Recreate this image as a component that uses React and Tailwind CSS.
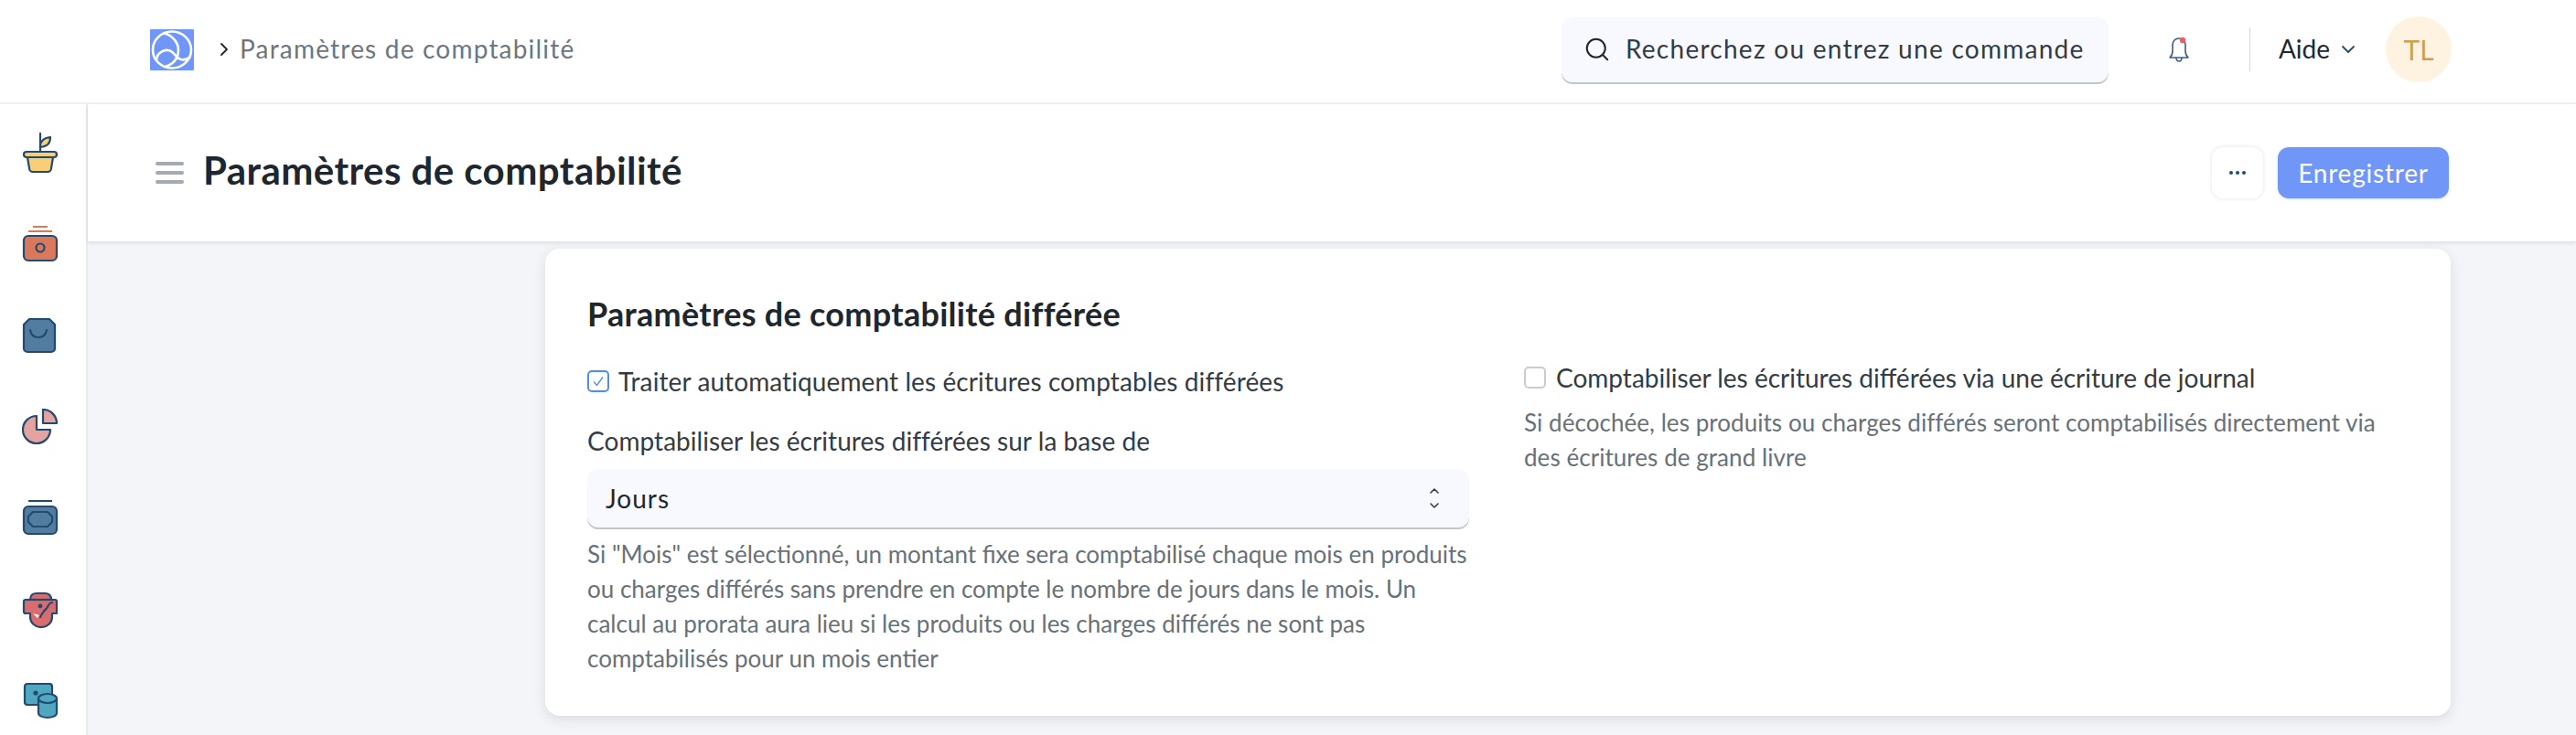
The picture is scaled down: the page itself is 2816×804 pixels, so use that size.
import React from 'react';
import { Search, ChevronRight, ChevronDown, ChevronUp } from 'lucide-react';

const navy = '#234a70';

const Logo = () => (
    <svg width="48" height="45" viewBox="0 0 48 45" className="shrink-0">
        <rect width="48" height="45" rx="1" fill="#7096f8" />
        <g fill="none" stroke="#fff" strokeWidth="2.6">
            <ellipse cx="24" cy="22.5" rx="21" ry="20" />
            <path d="M14 4c10 2 17 10 17 19 0 9-6 16-15 18" />
            <path d="M7 34c0-7 7-12 13-11 7 1 8 9 14 10 4 1 7 0 10-3" />
        </g>
    </svg>
);

const PotIcon = () => (
    <svg width="40" height="44" viewBox="0 0 40 44" fill="none" stroke={navy} strokeWidth="2.2" strokeLinejoin="round" strokeLinecap="round">
        <path d="M20 1v21" />
        <path d="M20 15c0-6 4-9 11-10 0 7-3 10-11 11z" fill="#f8cf76" />
        <path d="M6 27l2 12a4 4 0 004 4h16a4 4 0 004-4l2-12z" fill="#f8cf76" />
        <rect x="2" y="21" width="36" height="6" rx="3" fill="#f8cf76" />
    </svg>
);

const WalletIcon = () => (
    <svg width="40" height="40" viewBox="0 0 40 40" fill="none" stroke={navy} strokeWidth="2.2">
        <path d="M12 1h16M7 6h26" stroke="#d9785a" strokeWidth="2" />
        <rect x="2" y="11" width="36" height="27" rx="5" fill="#d9785a" />
        <circle cx="20" cy="24" r="4.5" />
    </svg>
);

const BagIcon = () => (
    <svg width="40" height="40" viewBox="0 0 40 40" fill="none" stroke={navy} strokeWidth="2.2" strokeLinecap="round">
        <path d="M8 2h22l6 6v26a4 4 0 01-4 4H6a4 4 0 01-4-4V8z" fill="#527ca0" strokeLinejoin="round" />
        <path d="M9 14c1 6 5 8 9 8s8-2 9-8" />
    </svg>
);

const PieIcon = () => (
    <svg width="40" height="40" viewBox="0 0 40 40" fill="none" stroke={navy} strokeWidth="2.2" strokeLinejoin="round">
        <path d="M16 8a15 15 0 1015 15H16z" fill="#e5a3a0" />
        <path d="M23 1a15 15 0 0115 15v0H23z" fill="#e5a3a0" />
    </svg>
);

const CardIcon = () => (
    <svg width="40" height="40" viewBox="0 0 40 40" fill="none" stroke={navy} strokeWidth="2.2" strokeLinejoin="round">
        <path d="M7 1h26" />
        <rect x="2" y="7" width="36" height="30" rx="5" fill="#527ca0" />
        <path d="M12 13h16l5 5v6l-5 5H12l-5-5v-6z" />
    </svg>
);

const SnakeIcon = () => (
    <svg width="40" height="40" viewBox="0 0 40 40" fill="none" stroke={navy} strokeWidth="2.2" strokeLinejoin="round">
        <path d="M9 9c0-5 3-7 7-7h9c4 0 7 2 7 7h4c1 0 2 1 2 2v13h-5v4c0 6-5 11-12 11S9 34 9 28v-4H4c-1 0-2-1-2-2V11c0-1 1-2 2-2z" fill="#d96c6c" />
        <path d="M4 9h28" />
        <path d="M34 12c-3 0-5 2-6 5-1 2-3 3-5 6-1 2-3 3-3 6" />
        <path d="M12 24l7 2-2 3z" fill="#fff" stroke="none" />
        <circle cx="20" cy="16" r="2.4" fill={navy} stroke="none" />
    </svg>
);

const DataIcon = () => (
    <svg width="40" height="40" viewBox="0 0 40 40" fill="none" stroke={navy} strokeWidth="2.2" strokeLinejoin="round">
        <path d="M6 1h24a3 3 0 013 3v18H20v2H6a3 3 0 01-3-3V4a3 3 0 013-3z" fill="#4fa8c0" />
        <circle cx="15" cy="11" r="2.6" fill={navy} stroke="none" />
        <path d="M18 17v16c0 3 5 5 10 5s10-2 10-5V17z" fill="#4fa8c0" />
        <ellipse cx="28" cy="17" rx="10" ry="5" fill="#4fa8c0" />
    </svg>
);

const BellIcon = () => (
    <svg width="26" height="30" viewBox="0 0 26 30" fill="none" stroke="#3f5c80" strokeWidth="1.6" strokeLinejoin="round">
        <path d="M13 3c-4 0-7 3-7 7v7c0 3-1 5-3 7h20c-2-2-3-4-3-7v-7c0-4-3-7-7-7z" />
        <path d="M10 24c0 2 1 4 3 4s3-2 3-4" />
        <circle cx="17" cy="5" r="3.2" fill="#f05d5e" stroke="none" />
    </svg>
);

const sidebarIcons = [PotIcon, WalletIcon, BagIcon, PieIcon, CardIcon, SnakeIcon, DataIcon];

const App = () => {
    return (
        <div className="h-[804px] w-[2816px] overflow-hidden flex flex-col bg-[#f4f5f8] font-['Lato',sans-serif] text-[#1f272e]">
            {/* Navbar */}
            <nav className="h-[114px] shrink-0 bg-white border-b-2 border-[#edf0f4] flex items-center pl-[164px] pr-[136px] pb-[4px]">
                <Logo />
                <ChevronRight size={24} strokeWidth={1.8} className="ml-[21px] text-[#1f272e]" />
                <span className="ml-[5px] pb-[2px] text-[28px] tracking-[1.2px] text-[#6c7680]">Paramètres de comptabilité</span>
                <div className="ml-auto flex items-center">
                    <div className="w-[598px] h-[71px] rounded-[12px] bg-[#f8f9fe] shadow-[0_2px_0_#c0c6cc] flex items-center pl-[24px]">
                        <Search size={30} strokeWidth={1.6} className="text-[#1f272e]" />
                        <span className="ml-[16px] pb-[2px] text-[28px] tracking-[1.27px] text-[#333c44]">Recherchez ou entrez une commande</span>
                    </div>
                    <div className="ml-[64px]"><BellIcon /></div>
                    <div className="ml-[64px] w-px h-[48px] bg-[#d1d8dd]" />
                    <span className="ml-[31px] pb-[2px] text-[28px] text-[#1f272e]">Aide</span>
                    <ChevronDown size={24} strokeWidth={1.8} className="ml-[8px] text-[#234a70]" />
                    <div className="ml-[29px] w-[72px] h-[72px] rounded-full bg-[#fdf3e0] flex items-center justify-center text-[30px] text-[#cfa04a]">TL</div>
                </div>
            </nav>

            <div className="flex flex-1 min-h-0">
                {/* Sidebar */}
                <aside className="w-[96px] shrink-0 bg-white border-r-2 border-[#e8ebf1] flex flex-col items-start pl-[24px] pt-[33px] gap-[60px]">
                    {sidebarIcons.map((Icon, i) => (
                        <div key={i} className="h-[40px] flex items-center"><Icon /></div>
                    ))}
                </aside>

                <main className="flex-1 min-w-0 flex flex-col">
                    {/* Page head */}
                    <header className="h-[150px] shrink-0 bg-white shadow-[0_2px_4px_rgba(25,39,52,0.1)] flex items-center pl-[74px] pr-[139px]">
                        <div className="flex flex-col gap-[6px] w-[31px]">
                            <span className="h-[4px] rounded-full bg-[#a3aab1]" />
                            <span className="h-[4px] rounded-full bg-[#a3aab1]" />
                            <span className="h-[4px] rounded-full bg-[#a3aab1]" />
                        </div>
                        <h1 className="ml-[21px] pb-[6px] text-[42px] tracking-[0.45px] font-bold">Paramètres de comptabilité</h1>
                        <div className="ml-auto flex items-center">
                            <button className="w-[56px] h-[56px] rounded-[12px] bg-white shadow-[0_0_4px_rgba(25,39,52,0.14)] flex items-center justify-center gap-[3px]">
                                <span className="w-[4px] h-[4px] rounded-full bg-[#234a70]" />
                                <span className="w-[4px] h-[4px] rounded-full bg-[#234a70]" />
                                <span className="w-[4px] h-[4px] rounded-full bg-[#234a70]" />
                            </button>
                            <button className="ml-[16px] w-[187px] h-[56px] rounded-[12px] bg-[#7096f8] text-white text-[28px] tracking-[0.8px] shadow-[0_1px_3px_rgba(25,39,52,0.15)]">Enregistrer</button>
                        </div>
                    </header>

                    {/* Form card */}
                    <div className="pl-[500px] pr-[137px] pt-[8px]">
                        <section className="h-[511px] rounded-[16px] bg-white shadow-[0_4px_14px_rgba(25,39,52,0.12)] pl-[46px] pr-[70px] pt-[48px]">
                            <h2 className="text-[36px] tracking-[0.28px] font-bold leading-[46px]">Paramètres de comptabilité différée</h2>
                            <div className="flex gap-[60px] mt-[-1px]">
                                <div className="w-[964px] shrink-0 pt-[34px]">
                                    <label className="flex items-center h-[36px]">
                                        <span className="w-[24px] h-[24px] rounded-[5px] border-2 border-[#4b8df0] flex items-center justify-center">
                                            <svg width="16" height="16" viewBox="0 0 16 16" fill="none" stroke="#4b8df0" strokeWidth="1.3"><path d="M3 8.5l3.5 4 6.5-9" /></svg>
                                        </span>
                                        <span className="ml-[10px] text-[28px] tracking-[0.1px] text-[#333c44]">Traiter automatiquement les écritures comptables différées</span>
                                    </label>
                                    <p className="mt-[29px] text-[28px] tracking-[0.05px] leading-[36px] text-[#333c44]">Comptabiliser les écritures différées sur la base de</p>
                                    <div className="mt-[13px] h-[64px] rounded-[12px] bg-[#f8f9fe] shadow-[0_2px_0_#c0c6cc] flex items-center justify-between pl-[20px] pr-[30px]">
                                        <span className="text-[28px] tracking-[1px] text-[#1f272e]">Jours</span>
                                        <div className="flex flex-col text-[#333c44]">
                                            <ChevronUp size={16} strokeWidth={2.4} />
                                            <ChevronDown size={16} strokeWidth={2.4} />
                                        </div>
                                    </div>
                                    <p className="mt-[10px] text-[26px] leading-[38px] text-[#687178]">
                                        Si "Mois" est sélectionné, un montant fixe sera comptabilisé chaque mois en produits ou charges différés sans prendre en compte le nombre de jours dans le mois. Un calcul au prorata aura lieu si les produits ou les charges différés ne sont pas comptabilisés pour un mois entier
                                    </p>
                                </div>
                                <div className="flex-1 min-w-0 pt-[30px]">
                                    <label className="flex items-center h-[36px]">
                                        <span className="w-[24px] h-[24px] rounded-[5px] border-2 border-[#c6ccd2]" />
                                        <span className="ml-[11px] text-[28px] text-[#333c44]">Comptabiliser les écritures différées via une écriture de journal</span>
                                    </label>
                                    <p className="mt-[12px] w-[940px] text-[26px] tracking-[0.05px] leading-[38px] text-[#687178]">
                                        Si décochée, les produits ou charges différés seront comptabilisés directement via des écritures de grand livre
                                    </p>
                                </div>
                            </div>
                        </section>
                    </div>
                </main>
            </div>
        </div>
    );
};

export default App;
